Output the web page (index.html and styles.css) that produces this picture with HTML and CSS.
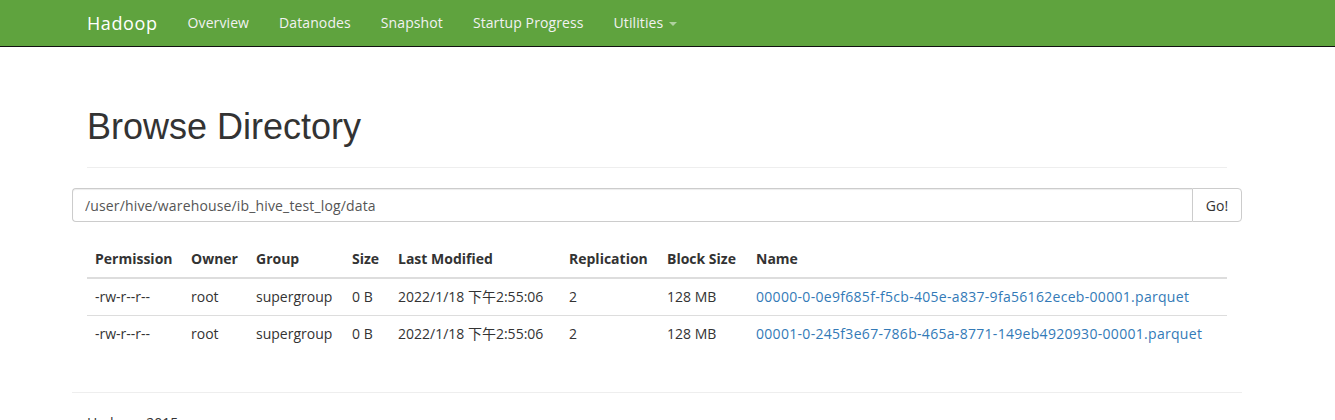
FILE: index.html
```html
<!DOCTYPE html>
<html>
<head>
<meta charset="utf-8">
<title>Browsing HDFS</title>
<link rel="stylesheet" href="styles.css">
</head>
<body>
<header class="navbar">
  <div class="container nav-inner">
    <a class="brand" href="#">Hadoop</a>
    <ul class="nav">
      <li><a href="#">Overview</a></li>
      <li><a href="#">Datanodes</a></li>
      <li><a href="#">Snapshot</a></li>
      <li><a href="#">Startup Progress</a></li>
      <li><a href="#">Utilities <span class="caret"></span></a></li>
    </ul>
  </div>
</header>
<main class="container">
  <div class="page-header">
    <h1>Browse Directory</h1>
  </div>
  <form class="input-group">
    <input class="path-input" type="text" value="/user/hive/warehouse/ib_hive_test_log/data">
    <button class="go-btn" type="button">Go!</button>
  </form>
  <div class="table-wrap">
    <table class="listing">
      <colgroup>
        <col class="c-perm"><col class="c-owner"><col class="c-group"><col class="c-size"><col class="c-mod"><col class="c-rep"><col class="c-block"><col class="c-name">
      </colgroup>
      <thead>
        <tr><th>Permission</th><th>Owner</th><th>Group</th><th>Size</th><th>Last Modified</th><th>Replication</th><th>Block Size</th><th>Name</th></tr>
      </thead>
      <tbody>
        <tr><td>-rw-r--r--</td><td>root</td><td>supergroup</td><td>0 B</td><td>2022/1/18 下午2:55:06</td><td>2</td><td>128 MB</td><td><a href="#">00000-0-0e9f685f-f5cb-405e-a837-9fa56162eceb-00001.parquet</a></td></tr>
        <tr><td>-rw-r--r--</td><td>root</td><td>supergroup</td><td>0 B</td><td>2022/1/18 下午2:55:06</td><td>2</td><td>128 MB</td><td><a href="#">00001-0-245f3e67-786b-465a-8771-149eb4920930-00001.parquet</a></td></tr>
      </tbody>
    </table>
  </div>
  <hr class="footer-rule">
  <footer class="footer"><p>Hadoop, 2015.</p></footer>
</main>
</body>
</html>
```
FILE: styles.css
```css
html, body {
  margin: 0;
  padding: 0;
  background: #fff;
}
body {
  font-family: "Open Sans", "Noto Sans CJK SC", sans-serif;
  font-size: 14px;
  line-height: 20px;
  color: #333;
}
a { text-decoration: none; }
.container {
  width: 1170px;
  margin-left: 72px;
  box-sizing: border-box;
}
.navbar {
  background: #5fa33e;
  border-bottom: 1px solid #111;
  height: 46px;
  margin-bottom: 20px;
}
.nav-inner {
  display: flex;
  align-items: center;
  height: 46px;
}
.brand {
  color: #fff;
  font-size: 18px;
  letter-spacing: 0.6px;
  padding: 0 15px;
  line-height: 46px;
}
.nav {
  list-style: none;
  display: flex;
  margin: 0;
  padding: 0;
}
.nav a {
  display: block;
  color: #f2f2f2;
  padding: 0 15px;
  letter-spacing: 0.1px;
  line-height: 46px;
}
.caret {
  display: inline-block;
  width: 0;
  height: 0;
  margin-left: 2px;
  vertical-align: middle;
  border-top: 4px solid rgba(255,255,255,0.5);
  border-left: 4px solid transparent;
  border-right: 4px solid transparent;
}
main.container { padding: 0 15px; }
.page-header {
  margin: 60px 0 20px;
  padding-bottom: 9px;
  border-bottom: 1px solid #eee;
}
h1 {
  font-family: "Liberation Sans", Arial, sans-serif;
  font-weight: 500;
  font-size: 36px;
  line-height: 40px;
  margin: 0 0 11px;
  color: #333;
}
.input-group {
  display: flex;
  margin: 0 -15px;
  height: 34px;
}
.path-input {
  flex: 1;
  height: 34px;
  box-sizing: border-box;
  border: 1px solid #ccc;
  border-right: none;
  border-radius: 4px 0 0 4px;
  padding: 6px 12px;
  font-family: "Open Sans", "Noto Sans CJK SC", sans-serif;
  font-size: 14px;
  letter-spacing: 0.15px;
  color: #555;
  box-shadow: inset 0 1px 1px rgba(0,0,0,0.075);
  outline: none;
}
.go-btn {
  width: 50px;
  height: 34px;
  border: 1px solid #ccc;
  border-radius: 0 4px 4px 0;
  background: #fff;
  font-family: "Open Sans", "Noto Sans CJK SC", sans-serif;
  font-size: 14px;
  color: #333;
  padding: 0;
}
.table-wrap { margin-top: 19px; }
.listing {
  width: 100%;
  table-layout: fixed;
  border-collapse: collapse;
  margin-bottom: 20px;
}
.c-perm { width: 96px; }
.c-owner { width: 65px; }
.c-group { width: 96px; }
.c-size { width: 46px; }
.c-mod { width: 171px; }
.c-rep { width: 98px; }
.c-block { width: 89px; }
.listing th, .listing td {
  padding: 8px;
  text-align: left;
  white-space: nowrap;
  line-height: 20px;
}
.listing th {
  font-weight: bold;
  border-bottom: 2px solid #ddd;
}
.listing tbody tr + tr td { border-top: 1px solid #ddd; }
.listing a { color: #337ab7; letter-spacing: 0.3px; }
.footer-rule {
  margin: 40px -15px 20px;
  border: 0;
  border-top: 1px solid #eee;
}
.footer p { margin: 0; color: #333; }
```
